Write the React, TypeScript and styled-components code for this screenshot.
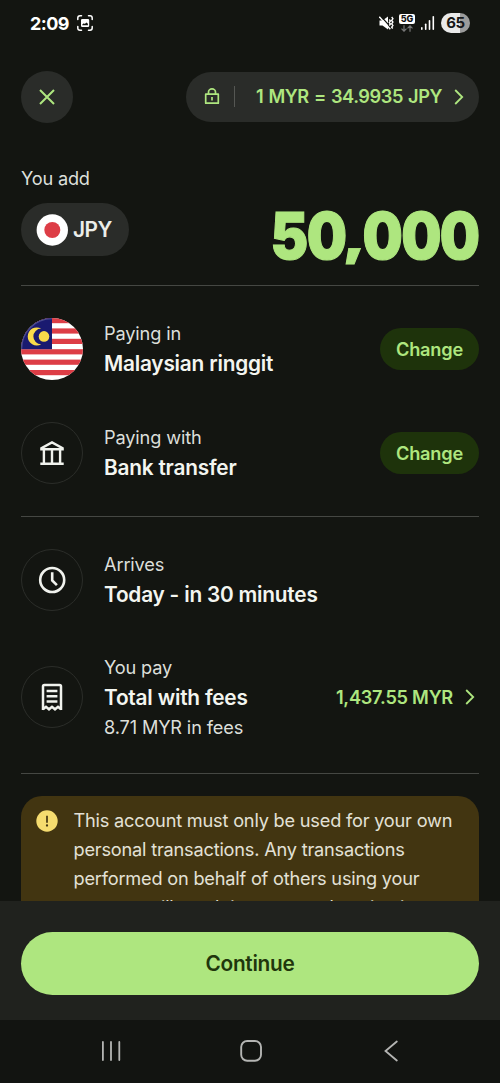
import React from "react";
import styled, { createGlobalStyle } from "styled-components";

const GlobalStyle = createGlobalStyle`
  * { box-sizing: border-box; }
  body { margin: 0; background: #131511; font-family: Inter, "Liberation Sans", sans-serif; }
  button { font-family: inherit; border: 0; padding: 0; margin: 0; }
  svg { display: block; flex: none; }
`;

const Screen = styled.div`
  width: 500px;
  height: 1083px;
  display: flex;
  flex-direction: column;
  overflow: hidden;
  background: #131511;
  color: #e8ebe6;
`;

const StatusBar = styled.header`
  height: 46px;
  flex: none;
  display: flex;
  justify-content: space-between;
  align-items: center;
  padding: 0 30px;
`;

const StatusGroup = styled.div<{ $gap: number }>`
  display: flex;
  align-items: center;
  gap: ${(p) => p.$gap}px;
`;

const Clock = styled.span`
  font-size: 18px;
  font-weight: 700;
  color: #fff;
  letter-spacing: -0.6px;
`;

const Battery = styled.span`
  width: 29px;
  height: 20px;
  margin-left: 1px;
  border-radius: 10px;
  background: linear-gradient(90deg, #e9e9e9 65%, #9b9b9b 65%);
  color: #171717;
  font-size: 15px;
  font-weight: 700;
  line-height: 20px;
  letter-spacing: -0.5px;
  text-align: center;
`;

const Network = styled.span`
  display: flex;
  flex-direction: column;
  align-items: center;
  gap: 1px;
  width: 16px;
`;

const NetworkBadge = styled.span`
  width: 16px;
  height: 10px;
  border-radius: 2px;
  background: #fff;
  color: #111;
  font-size: 9px;
  font-weight: 800;
  line-height: 10px;
  text-align: center;
`;

const Content = styled.main`
  height: 855px;
  flex: none;
  overflow: hidden;
  padding: 24px 21px 0;
`;

const TopBar = styled.div`
  display: flex;
  justify-content: space-between;
  align-items: center;
  height: 53px;
`;

const CloseButton = styled.button`
  width: 52px;
  height: 52px;
  border-radius: 50%;
  background: #2a2c29;
  display: flex;
  align-items: center;
  justify-content: center;
`;

const RatePill = styled.button`
  width: 293px;
  height: 50px;
  border-radius: 25px;
  background: #2a2c29;
  display: flex;
  align-items: center;
  padding: 0 15px 0 18px;
  color: #aee67f;
`;

const PillRule = styled.span`
  width: 1px;
  height: 21px;
  margin: 0 21px 0 14px;
  background: #555753;
`;

const RateText = styled.span`
  flex: 1;
  padding-bottom: 1px;
  font-size: 18.2px;
  font-weight: 600;
  letter-spacing: -0.42px;
  word-spacing: 1px;
  text-align: left;
  white-space: nowrap;
`;

const FieldLabel = styled.div`
  margin-top: 43px;
  font-size: 18.2px;
  line-height: 24px;
  letter-spacing: -0.2px;
  color: #dcdfda;
`;

const AmountRow = styled.section`
  display: flex;
  justify-content: space-between;
  align-items: center;
  height: 53px;
  margin-top: 13px;
`;

const CurrencyPill = styled.button`
  width: 108px;
  height: 53px;
  border-radius: 27px;
  background: #2a2c29;
  display: flex;
  align-items: center;
  gap: 5px;
  padding-left: 15px;
  color: #eceee9;
  font-size: 20.8px;
  font-weight: 600;
  letter-spacing: -0.5px;
`;

const Amount = styled.div`
  color: #aee67f;
  font-size: 65px;
  font-weight: 900;
  line-height: 53px;
  letter-spacing: -1.8px;
  padding-top: 12px;
  transform: scaleX(0.872);
  transform-origin: right center;
  -webkit-text-stroke: 1.1px #aee67f;
`;

const Separator = styled.span`
  display: inline-block;
  margin: 0 -1px 0 -2px;
  transform: translateY(-3px) scale(1.1, 0.74);
  transform-origin: center 80%;
`;

const Divider = styled.hr<{ $top: number }>`
  height: 1px;
  border: 0;
  margin: ${(p) => p.$top}px 0 0;
  background: #454743;
`;

const Row = styled.section<{ $top: number; $height: number }>`
  display: flex;
  align-items: center;
  height: ${(p) => p.$height}px;
  margin-top: ${(p) => p.$top}px;
`;

const IconCircle = styled.div`
  width: 62px;
  height: 62px;
  flex: none;
  border: 1px solid #2b2d29;
  border-radius: 50%;
  display: flex;
  align-items: center;
  justify-content: center;
`;

const RowText = styled.div<{ $drop?: number }>`
  flex: 1;
  margin-left: 21px;
  padding-top: ${(p) => p.$drop ?? 0}px;
`;

const Caption = styled.div`
  padding-bottom: 1px;
  font-size: 18.2px;
  line-height: 29px;
  letter-spacing: -0.15px;
  color: #dcdfda;
  white-space: nowrap;
`;

const Title = styled.div`
  font-size: 20.8px;
  line-height: 30px;
  font-weight: 600;
  letter-spacing: -0.2px;
  color: #f3f5f0;
  white-space: nowrap;
`;

const ChangeButton = styled.button`
  width: 99px;
  height: 42px;
  border-radius: 21px;
  background: #1e330b;
  color: #aee67f;
  font-size: 18.2px;
  font-weight: 600;
  letter-spacing: -0.2px;
`;

const TotalLink = styled.div`
  display: flex;
  align-items: center;
  gap: 12px;
  margin-right: 4px;
  color: #aee67f;
  font-size: 18.2px;
  font-weight: 600;
  letter-spacing: -0.25px;
`;

const Notice = styled.aside`
  height: 160px;
  margin-top: 22px;
  border-radius: 21px;
  background: #423511;
  display: flex;
  align-items: flex-start;
  gap: 15.5px;
  padding: 10px 20px 0 15px;
`;

const NoticeBadge = styled.div`
  display: flex;
  padding-top: 4px;
`;

const NoticeText = styled.p`
  margin: 0;
  font-size: 18.2px;
  line-height: 29px;
  letter-spacing: -0.21px;
  color: #e3e1d6;
  white-space: nowrap;
`;

const Footer = styled.footer`
  height: 119px;
  flex: none;
  padding: 31px 21px 0;
  background: #20221e;
`;

const ContinueButton = styled.button`
  display: block;
  width: 458px;
  height: 63px;
  border-radius: 32px;
  background: #aee67f;
  color: #1f360c;
  font-size: 20.8px;
  font-weight: 600;
  letter-spacing: -0.3px;
`;

const NavBar = styled.nav`
  flex: 1;
  display: flex;
  align-items: center;
  padding: 0 0 2px 101px;
  background: #121411;
`;

const NavKey = styled.span<{ $before: number }>`
  margin-left: ${(p) => p.$before}px;
`;

const Chevron = () => (
  <svg width="10" height="16" viewBox="0 0 10 16" fill="none" stroke="#aee67f" strokeWidth="1.8">
    <path d="M1.200 1l7 7-7 7" />
  </svg>
);

const CaptureIcon = () => (
  <svg width="16" height="16" viewBox="0 0 16 16" fill="none" stroke="#fff" strokeWidth="1.5" strokeLinecap="round">
    <path d="M.8 4.5V3Q.8.8 3 .8h1.500M11.500.8H13Q15.200.8 15.200 3v1.500M15.200 11.500V13q0 2.200-2.200 2.200h-1.500M4.500 15.200H3Q.8 15.200.8 13v-1.500" />
    <path fill="#fff" stroke="none" fillRule="evenodd" d="M5.100 4h5.900q1.200 0 1.200 1.200v5.600q0 1.200-1.200 1.200H5.100Q4 12 4 10.800V5.200Q4 4 5.100 4ZM5.300 10.300h5.600V8.700L9.400 7.400 7.800 8.900l-.9-.6-1.600 1.100Z" />
  </svg>
);

const MuteIcon = () => (
  <svg width="15" height="16" viewBox="0 0 15 16" fill="none" stroke="#fff">
    <path d="M.5 5.500h3L9 1.500v13l-5.500-4h-3Z" fill="#fff" stroke="none" />
    <path d="M1.500 1l11 12" stroke="#131511" strokeWidth="1.200" />
    <path d="M.3 1.800l11 12.400" strokeWidth="1.500" />
    <path d="M10.300 4.500l1.100 1.500-1.100 1.500 1.100 1.500-1.100 1.500M12.700 2l1.200 1.700-1.200 1.700 1.200 1.700-1.200 1.700 1.200 1.700-1.200 1.700 1 1.300" strokeWidth="1.400" />
  </svg>
);

const DataArrows = () => (
  <svg width="12" height="7" viewBox="0 0 12 7" fill="none" stroke="#777" strokeWidth="1.200">
    <path d="M3 .3v5.700M.5 3.700L3 6.200l2.500-2.500M9 6.800V1M6.500 3.300L9 .8l2.500 2.500" />
  </svg>
);

const SignalIcon = () => (
  <svg width="14" height="14" viewBox="0 0 14 14" fill="#fff">
    <rect x="0" y="11" width="1.600" height="3" rx=".8" />
    <rect x="3.900" y="7.500" width="1.600" height="6.500" rx=".8" />
    <rect x="7.700" y="4" width="1.600" height="10" rx=".8" />
    <rect x="11.500" y="0" width="1.600" height="14" rx=".8" />
  </svg>
);

const CloseIcon = () => (
  <svg width="16" height="16" viewBox="0 0 16 16" stroke="#aee67f" strokeWidth="2">
    <path d="M1 1l14 14M15 1L1 15" />
  </svg>
);

const LockIcon = () => (
  <svg width="16" height="17" viewBox="0 0 16 17" fill="none" stroke="#aee67f" strokeWidth="1.700">
    <path d="M1.700 6.200h12.600v9H1.700Z" strokeLinejoin="round" />
    <path d="M4.500 6V4a3.500 3.100 0 0 1 7 0v2M8 9v3.600" />
  </svg>
);

const JapanFlag = () => (
  <svg width="32" height="32" viewBox="0 0 32 32">
    <circle cx="16.300" cy="16" r="15.700" fill="#fff" />
    <circle cx="16.300" cy="16" r="8" fill="#dd3d46" />
  </svg>
);

const MalaysiaFlag = () => (
  <svg width="62" height="62" viewBox="0 0 62 62">
    <defs>
      <clipPath id="flagRound">
        <circle cx="31" cy="31" r="31" />
      </clipPath>
    </defs>
    <g clipPath="url(#flagRound)">
      <rect width="62" height="62" fill="#fff" />
      <g fill="#dd3d46">
        {[0, 1, 2, 3, 4, 5].map((i) => (
          <rect key={i} y={i * 10.4} width="62" height="5.200" />
        ))}
      </g>
      <rect width="31" height="31.200" fill="#1a1a70" />
      <path fill="#fadb4a" d="M20.200 10.600A9 9 0 1 0 20.200 26.200A7.800 7.800 0 1 1 20.200 10.600Z" />
      <circle cx="23" cy="18.400" r="5.300" fill="#fadb4a" />
      <path d="M.6 31A30.400 30.400 0 0 1 31 .6" fill="none" stroke="#4a4b8e" strokeWidth="1.200" />
    </g>
  </svg>
);

const BankIcon = () => (
  <svg width="26" height="26" viewBox="0 0 26 26" fill="none" stroke="#f0f2ed" strokeWidth="2.400">
    <path d="M1.300 23.700H24.700M4.900 10v13.500M13 10v13.500M21.100 10v13.500" />
    <path d="M2.400 9.200V8.100L13 2.400 23.600 8.100v1.100Z" />
  </svg>
);

const ClockIcon = () => (
  <svg width="28" height="28" viewBox="0 0 28 28" fill="none" stroke="#f0f2ed" strokeWidth="2.600">
    <circle cx="14.200" cy="14" r="12" />
    <path d="M14.200 6.200v8.200l4.700 4.700" />
  </svg>
);

const ReceiptIcon = () => (
  <svg width="22" height="28" viewBox="0 0 22 28" fill="none" stroke="#f0f2ed" strokeWidth="2.500">
    <path d="M2 27V3.500Q2 2.100 3.400 2.100h15.200Q20 2.100 20 3.500V27M2 26.300l3-2.500 3 2.500 3-2.500 3 2.500 3-2.500 3 2.500" />
    <path d="M5.600 8h10.800M5.600 13.200h10.800M5.600 18.400h10.800" />
  </svg>
);

const WarningIcon = () => (
  <svg width="22" height="22" viewBox="0 0 22 22">
    <circle cx="11" cy="11" r="10.700" fill="#f5dc6f" />
    <path d="M11 5.800v6.900" stroke="#423511" strokeWidth="1.700" />
    <circle cx="11" cy="15.500" r="1.150" fill="#423511" />
  </svg>
);

const RecentsIcon = () => (
  <svg width="20" height="20" viewBox="0 0 20 20" stroke="#b4b5b3" strokeWidth="1.800" strokeLinecap="round">
    <path d="M1.900 1v18M10 1v18M18.300 1v18" />
  </svg>
);

const HomeIcon = () => (
  <svg width="22" height="22" viewBox="0 0 22 22" fill="none" stroke="#b4b5b3" strokeWidth="1.900">
    <rect x="1.200" y="1" width="19.800" height="19.800" rx="6" />
  </svg>
);

const BackIcon = () => (
  <svg width="14" height="22" viewBox="0 0 14 22" fill="none" stroke="#b4b5b3" strokeWidth="1.800" strokeLinecap="round">
    <path d="M12.800 1.500L1.500 11l11.300 9.500" />
  </svg>
);

export default function App() {
  return (
    <>
      <GlobalStyle />
      <Screen>
        <StatusBar>
          <StatusGroup $gap={8}>
            <Clock>2:09</Clock>
            <CaptureIcon />
          </StatusGroup>
          <StatusGroup $gap={5.5}>
            <MuteIcon />
            <Network>
              <NetworkBadge>5G</NetworkBadge>
              <DataArrows />
            </Network>
            <SignalIcon />
            <Battery>65</Battery>
          </StatusGroup>
        </StatusBar>

        <Content>
          <TopBar>
            <CloseButton aria-label="Close">
              <CloseIcon />
            </CloseButton>
            <RatePill>
              <LockIcon />
              <PillRule />
              <RateText>1 MYR = 34.9935 JPY</RateText>
              <Chevron />
            </RatePill>
          </TopBar>

          <FieldLabel>You add</FieldLabel>
          <AmountRow>
            <CurrencyPill>
              <JapanFlag />
              JPY
            </CurrencyPill>
            <Amount>
              50<Separator>,</Separator>000
            </Amount>
          </AmountRow>
          <Divider $top={29} />

          <Row $top={32} $height={62}>
            <MalaysiaFlag />
            <RowText>
              <Caption>Paying in</Caption>
              <Title>Malaysian ringgit</Title>
            </RowText>
            <ChangeButton>Change</ChangeButton>
          </Row>
          <Row $top={42} $height={62}>
            <IconCircle>
              <BankIcon />
            </IconCircle>
            <RowText>
              <Caption>Paying with</Caption>
              <Title>Bank transfer</Title>
            </RowText>
            <ChangeButton>Change</ChangeButton>
          </Row>
          <Divider $top={32} />

          <Row $top={32} $height={62}>
            <IconCircle>
              <ClockIcon />
            </IconCircle>
            <RowText>
              <Caption>Arrives</Caption>
              <Title>Today - in 30 minutes</Title>
            </RowText>
          </Row>
          <Row $top={41} $height={90}>
            <IconCircle>
              <ReceiptIcon />
            </IconCircle>
            <RowText $drop={2}>
              <Caption>You pay</Caption>
              <Title>Total with fees</Title>
              <Caption>8.71 MYR in fees</Caption>
            </RowText>
            <TotalLink>
              1,437.55 MYR
              <Chevron />
            </TotalLink>
          </Row>
          <Divider $top={31} />

          <Notice>
            <NoticeBadge>
              <WarningIcon />
            </NoticeBadge>
            <NoticeText>
              This account must only be used for your own
              <br />
              personal transactions. Any transactions
              <br />
              performed on behalf of others using your
              <br />
              account will result in account deactivation.
            </NoticeText>
          </Notice>
        </Content>

        <Footer>
          <ContinueButton>Continue</ContinueButton>
        </Footer>
        <NavBar>
          <NavKey $before={0}>
            <RecentsIcon />
          </NavKey>
          <NavKey $before={118.500}>
            <HomeIcon />
          </NavKey>
          <NavKey $before={122}>
            <BackIcon />
          </NavKey>
        </NavBar>
      </Screen>
    </>
  );
}
